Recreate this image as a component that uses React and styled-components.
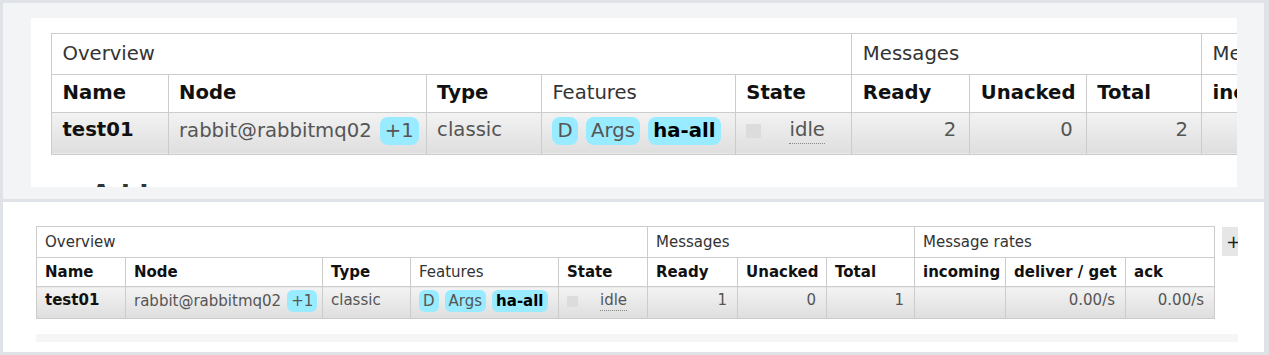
import React from "react";
import styled, { createGlobalStyle } from "styled-components";

const GlobalStyle = createGlobalStyle`
  html, body { margin: 0; padding: 0; background: #dfe2e6; }
  body { font-family: "DejaVu Sans", Verdana, sans-serif; }
`;

const Frame = styled.div`
  width: 1269px;
  height: 355px;
  box-sizing: border-box;
  padding: 3px 5px 3px 3px;
  display: flex;
  flex-direction: column;
  gap: 3px;
`;

// top half: a zoomed-in crop of the same table
const ZoomPanel = styled.section`
  height: 196px;
  box-sizing: border-box;
  background: #f3f4f5;
  padding: 15px 27px 12px 28px;
`;

const ZoomCanvas = styled.div`
  --s: 1.31;
  height: 100%;
  box-sizing: border-box;
  background: #fff;
  overflow: hidden;
  padding: 15px 0 0 20px;
`;

const PagePanel = styled.section`
  flex: 1;
  background: #fff;
  padding: 24px 0 0 33px;
`;

const PageCanvas = styled.div`
  --s: 1;
  width: 1202px;
  overflow: hidden;
`;

const TableRow = styled.div`
  display: flex;
  align-items: flex-start;
  gap: 7px;
`;

const Grid = styled.table`
  flex: none;
  border-collapse: collapse;
  table-layout: fixed;
  width: calc(1178px * var(--s));
  font-size: calc(15px * var(--s));
  line-height: calc(18px * var(--s));
`;

const Col = styled.col`
  width: calc(${p => p.$w}px * var(--s));
`;

const GroupHead = styled.th`
  height: calc(31px * var(--s));
  box-sizing: border-box;
  padding: 0 calc(8px * var(--s));
  border: 1px solid #ccc;
  background: #fff;
  text-align: left;
  font-weight: normal;
  color: #333;
  white-space: nowrap;
  overflow: hidden;
`;

const ColHead = styled.th`
  height: calc(29px * var(--s));
  box-sizing: border-box;
  padding: 0 calc(8px * var(--s));
  border: 1px solid #ccc;
  background: #fff;
  text-align: left;
  font-weight: ${p => (p.$plain ? "normal" : "bold")};
  color: ${p => (p.$plain ? "#333" : "#111")};
  white-space: nowrap;
  overflow: hidden;
`;

const Cell = styled.td`
  height: calc(32px * var(--s));
  box-sizing: border-box;
  padding: calc(3px * var(--s)) calc(${p => (p.$num ? 10 : 8)}px * var(--s)) 0;
  border: 1px solid #ccc;
  background: linear-gradient(#f3f3f3, #dedede);
  vertical-align: top;
  text-align: ${p => (p.$num ? "right" : "left")};
  color: ${p => (p.$strong ? "#111" : "#555")};
  font-weight: ${p => (p.$strong ? "bold" : "normal")};
  line-height: calc(20px * var(--s));
  white-space: nowrap;
  overflow: hidden;
`;

const Chips = styled.span`
  display: inline-flex;
  vertical-align: top;
  align-items: center;
  gap: calc(6px * var(--s));
`;

const Badge = styled.span`
  display: inline-block;
  padding: calc(1px * var(--s)) calc(4px * var(--s));
  border-radius: calc(6px * var(--s));
  background: #99ebff;
  line-height: calc(20px * var(--s));
  color: ${p => (p.$policy ? "#000" : "#555")};
  font-weight: ${p => (p.$policy ? "bold" : "normal")};
`;

const StateBox = styled.span`
  display: inline-flex;
  vertical-align: top;
  align-items: center;
  gap: calc(22px * var(--s));
  padding-top: calc(1px * var(--s));
`;

const Dot = styled.span`
  width: calc(11px * var(--s));
  height: calc(11px * var(--s));
  background: #dcdcdc;
`;

const Abbr = styled.abbr`
  text-decoration: none;
  border-bottom: 1px dotted #888;
  line-height: calc(19px * var(--s));
  color: #555;
`;

const PlusButton = styled.button`
  flex: none;
  width: 22px;
  height: 29px;
  margin-top: 1px;
  padding: 0 0 0 4px;
  border: none;
  background: #e6e6e6;
  color: #222;
  font: 18px "DejaVu Sans", sans-serif;
  text-align: left;
`;

const NextSection = styled.h2`
  margin: 27px 0 0 15px;
  font-size: 26px;
  line-height: 1;
  font-weight: bold;
  color: #333;
  &::before {
    content: "▸";
    color: #999;
    margin-right: 12px;
  }
`;

const Shelf = styled.div`
  margin-top: 15px;
  height: 8px;
  width: 1202px;
  background: #f5f5f5;
`;

const widths = [89, 197, 88, 148, 89, 90, 89, 88, 91, 120, 89];

function QueueTable({ ready, total }) {
  return (
    <Grid>
      <colgroup>
        {widths.map((w, i) => (
          <Col key={i} $w={w} />
        ))}
      </colgroup>
      <thead>
        <tr>
          <GroupHead colSpan={5}>Overview</GroupHead>
          <GroupHead colSpan={3}>Messages</GroupHead>
          <GroupHead colSpan={3}>Message rates</GroupHead>
        </tr>
        <tr>
          <ColHead>Name</ColHead>
          <ColHead>Node</ColHead>
          <ColHead>Type</ColHead>
          <ColHead $plain>Features</ColHead>
          <ColHead>State</ColHead>
          <ColHead>Ready</ColHead>
          <ColHead>Unacked</ColHead>
          <ColHead>Total</ColHead>
          <ColHead>incoming</ColHead>
          <ColHead>deliver / get</ColHead>
          <ColHead>ack</ColHead>
        </tr>
      </thead>
      <tbody>
        <tr>
          <Cell $strong>test01</Cell>
          <Cell>
            <Chips>
              rabbit@rabbitmq02 <Badge>+1</Badge>
            </Chips>
          </Cell>
          <Cell>classic</Cell>
          <Cell>
            <Chips>
              <Badge>D</Badge>
              <Badge>Args</Badge>
              <Badge $policy>ha-all</Badge>
            </Chips>
          </Cell>
          <Cell>
            <StateBox>
              <Dot />
              <Abbr title="idle">idle</Abbr>
            </StateBox>
          </Cell>
          <Cell $num>{ready}</Cell>
          <Cell $num>0</Cell>
          <Cell $num>{total}</Cell>
          <Cell $num></Cell>
          <Cell $num>0.00/s</Cell>
          <Cell $num>0.00/s</Cell>
        </tr>
      </tbody>
    </Grid>
  );
}

export default function App() {
  return (
    <>
      <GlobalStyle />
      <Frame>
        <ZoomPanel>
          <ZoomCanvas>
            <QueueTable ready={2} total={2} />
            <NextSection>Add a new queue</NextSection>
          </ZoomCanvas>
        </ZoomPanel>
        <PagePanel>
          <PageCanvas>
            <TableRow>
              <QueueTable ready={1} total={1} />
              <PlusButton>+</PlusButton>
            </TableRow>
            <Shelf />
          </PageCanvas>
        </PagePanel>
      </Frame>
    </>
  );
}
